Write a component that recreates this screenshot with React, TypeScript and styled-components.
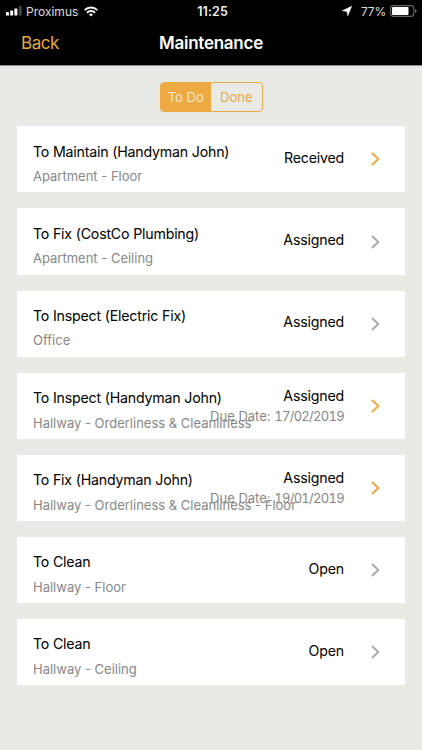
import React from 'react';
import styled, { createGlobalStyle } from 'styled-components';

const Global = createGlobalStyle`
  *{box-sizing:border-box}
  body{margin:0;background:#e9eae5;font-family:Inter,"Liberation Sans",sans-serif;}
`;
const Screen = styled.div`width:422px;height:750px;display:flex;flex-direction:column;background:#e9eae5;overflow:hidden;`;
const Header = styled.header`height:65px;flex:none;background:#000;color:#fff;display:flex;flex-direction:column;`;
const Divider = styled.div`height:1px;flex:none;background:#8a8a88;`;
const StatusBar = styled.div`height:22px;display:grid;grid-template-columns:1fr auto 1fr;align-items:center;padding:0 5px 0 6px;font-size:12px;`;
const Group = styled.div<{ $end?: boolean }>`display:flex;align-items:center;gap:4px;justify-content:${p => (p.$end ? 'flex-end' : 'flex-start')};`;
const Carrier = styled.span`color:#ddd;margin-right:2px;`;
const Percent = styled.span`color:#ddd;margin-left:5px;letter-spacing:-.2px;`;
const Clock = styled.span`font-weight:600;font-size:12.5px;color:#eee;position:static;padding-left:2px;letter-spacing:.1px;`;
const NavBar = styled.nav`height:42px;display:grid;grid-template-columns:1fr auto 1fr;align-items:center;padding:0 21px;`;
const Back = styled.span`color:#e9a742;font-size:17px;letter-spacing:-.45px;`;
const Title = styled.h1`margin:0;font-size:17px;font-weight:600;letter-spacing:-.25px;`;
const Segments = styled.div`align-self:center;flex:none;display:flex;width:103px;height:30px;margin-top:16px;border:1px solid #eda942;border-radius:4px;overflow:hidden;`;
const Segment = styled.div<{ $on?: boolean }>`flex:1;display:flex;align-items:center;justify-content:center;font-size:13px;color:${p => (p.$on ? '#f3e6cf' : '#e9a742')};background:${p => (p.$on ? '#eda942' : 'transparent')};`;
const List = styled.main`display:flex;flex-direction:column;gap:16px;padding:14.3px 17px;`;
const Card = styled.article`height:66.15px;flex:none;background:#fff;display:flex;align-items:center;padding:0 25px 0 16px;`;
const Info = styled.div`flex:1;min-width:0;white-space:nowrap;padding-top:9px;`;
const Name = styled.div`font-size:14.2px;line-height:20px;letter-spacing:-.2px;color:#000;`;
const Place = styled.div`font-size:13px;line-height:20px;margin-top:4.5px;color:#878787;`;
const State = styled.div<{ $dated: boolean }>`text-align:right;white-space:nowrap;margin-right:27px;padding-bottom:${p => (p.$dated ? 0 : 3)}px;`;
const Status = styled.div`font-size:14.2px;line-height:20px;letter-spacing:-.2px;color:#000;`;
const Due = styled.div`font-size:13px;line-height:20px;color:#878787;`;
const DueDay = styled.span`font-variant-numeric:tabular-nums;letter-spacing:-.7px;`;
const Chevron = styled.svg<{ $active: boolean }>`flex:none;fill:none;stroke:${p => (p.$active ? '#eda942' : '#aaa')};stroke-width:2;`;

const jobs = [
  { name: 'To Maintain (Handyman John)', place: 'Apartment - Floor', status: 'Received', due: '', active: true },
  { name: 'To Fix (CostCo Plumbing)', place: 'Apartment - Ceiling', status: 'Assigned', due: '', active: false },
  { name: 'To Inspect (Electric Fix)', place: 'Office', status: 'Assigned', due: '', active: false },
  { name: 'To Inspect (Handyman John)', place: 'Hallway - Orderliness & Cleanliness', status: 'Assigned', due: '17/02/2019', active: true },
  { name: 'To Fix (Handyman John)', place: 'Hallway - Orderliness & Cleanliness - Floor', status: 'Assigned', due: '19/01/2019', active: true },
  { name: 'To Clean', place: 'Hallway - Floor', status: 'Open', due: '', active: false },
  { name: 'To Clean', place: 'Hallway - Ceiling', status: 'Open', due: '', active: false },
];

const SignalIcon = () => (
  <svg width="16" height="10" viewBox="0 0 16 10" fill="#fff">
    <rect x="0" y="6" width="3" height="3.5" rx=".6" />
    <rect x="4.2" y="4.5" width="3" height="5" rx=".6" />
    <rect x="8.4" y="2.5" width="3" height="7" rx=".6" />
    <rect x="12.8" y="0" width="3" height="9.5" rx=".6" fill="#444" />
  </svg>
);
const WifiIcon = () => (
  <svg width="14" height="11" viewBox="0 0 14 11" fill="none" stroke="#fff" strokeWidth="2">
    <path d="M.7 4.1a9 9 0 0 1 12.6 0M3 6.7a5.7 5.7 0 0 1 8 0" />
    <path d="M7 10.6L4.9 8.5a3 3 0 0 1 4.2 0z" fill="#fff" stroke="none" />
  </svg>
);
const LocationIcon = () => (
  <svg width="10" height="10" viewBox="0 0 10 10" fill="#fff"><path d="M9.7.3L5.8 9.8L4.9 5.4L.3 4.7z" stroke="#fff" strokeWidth=".5" /></svg>
);
const BatteryIcon = () => (
  <svg width="27" height="12" viewBox="0 0 27 12">
    <rect x=".6" y=".6" width="23.2" height="10.8" rx="2.8" fill="none" stroke="#666" strokeWidth="1.1" />
    <rect x="2" y="2" width="16.5" height="8" rx="1" fill="#fff" />
    <path d="M25 4v4q1.6-.6 1.6-2T25 4z" fill="#666" />
  </svg>
);

export default function App() {
  return (
    <Screen>
      <Global />
      <Header>
        <StatusBar>
          <Group><SignalIcon /><Carrier>Proximus</Carrier><WifiIcon /></Group>
          <Clock>11:25</Clock>
          <Group $end><LocationIcon /><Percent>77%</Percent><BatteryIcon /></Group>
        </StatusBar>
        <NavBar><Back>Back</Back><Title>Maintenance</Title></NavBar>
      </Header>
      <Divider />
      <Segments><Segment $on>To Do</Segment><Segment>Done</Segment></Segments>
      <List>
        {jobs.map((job, i) => (
          <Card key={i}>
            <Info><Name>{job.name}</Name><Place>{job.place}</Place></Info>
            <State $dated={!!job.due}>
              <Status>{job.status}</Status>
              {job.due && <Due>Due Date: <DueDay>{job.due}</DueDay></Due>}
            </State>
            <Chevron $active={job.active} width="9" height="14" viewBox="0 0 9 14"><path d="M1 1l6.3 6L1 13" /></Chevron>
          </Card>
        ))}
      </List>
    </Screen>
  );
}
